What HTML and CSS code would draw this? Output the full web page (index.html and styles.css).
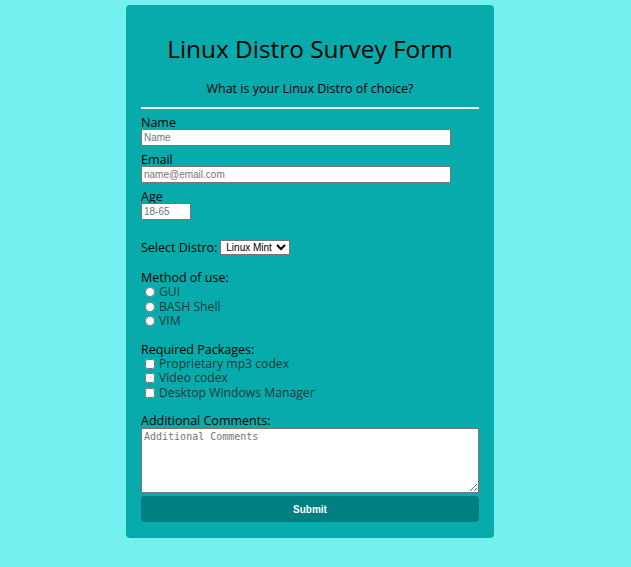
FILE: index.html
```html
<!DOCTYPE html>
<html>
<head>
<meta charset="utf-8">
<link rel="stylesheet" href="styles.css">
</head>
<body>
<main class="card">
  <h1 class="title">Linux Distro Survey Form</h1>
  <p class="subtitle">What is your Linux Distro of choice?</p>
  <hr class="rule">
  <form class="form">
    <div class="field">
      <label class="label">Name</label>
      <input class="text-input wide" type="text" placeholder="Name">
    </div>
    <div class="field">
      <label class="label">Email</label>
      <input class="text-input wide" type="email" placeholder="name@email.com">
    </div>
    <div class="field">
      <label class="label">Age</label>
      <input class="text-input age" type="text" placeholder="18-65">
    </div>
    <div class="select-row">
      <label class="label">Select Distro:</label>
      <select class="select"><option>Linux Mint</option></select>
    </div>
    <div class="group group-first">
      <div class="label">Method of use:</div>
      <label class="option"><input type="radio" name="m" class="radio"> GUI</label>
      <label class="option"><input type="radio" name="m" class="radio"> BASH Shell</label>
      <label class="option"><input type="radio" name="m" class="radio"> VIM</label>
    </div>
    <div class="group">
      <div class="label">Required Packages:</div>
      <label class="option"><input type="checkbox" class="check"> Proprietary mp3 codex</label>
      <label class="option"><input type="checkbox" class="check"> Video codex</label>
      <label class="option"><input type="checkbox" class="check"> Desktop Windows Manager</label>
    </div>
    <div class="comments">
      <div class="label">Additional Comments:</div>
      <textarea class="textarea" placeholder="Additional Comments"></textarea>
    </div>
    <button type="button" class="submit">Submit</button>
  </form>
</main>
</body>
</html>
```
FILE: styles.css
```css
html, body {
  margin: 0;
  padding: 0;
}
body {
  background: #74f0ef;
  font-family: "Open Sans", "Noto Sans", sans-serif;
  color: #000;
  min-height: 567px;
}
.card {
  width: 338px;
  margin: 5px 0 0 126px;
  background: #08abab;
  border-radius: 4px;
  padding: 15px 15px 16px;
}
.title {
  margin: 14px 0 0;
  font-size: 24.4px;
  font-weight: 400;
  text-align: center;
  line-height: 30px;
}
.subtitle {
  margin: 16px 0 0;
  font-size: 12.5px;
  text-align: center;
  line-height: 18px;
}
.rule {
  margin: 9px 0 0;
  border: none;
  border-top: 2px solid #f2f2f2;
  height: 0;
}
.form {
  display: flex;
  flex-direction: column;
}
.label {
  display: block;
  font-size: 12.5px;
  line-height: 15px;
}
.field {
  display: flex;
  flex-direction: column;
  margin-top: 6px;
}
.field + .field {
  margin-top: 6px;
}
.text-input {
  box-sizing: border-box;
  height: 17px;
  border: 1px solid #767676;
  padding: 1px 2px;
  font-family: "Liberation Sans", Arial, sans-serif;
  font-size: 10px;
  background: #fff;
  margin-top: -1px;
}
.text-input::placeholder {
  color: #757575;
}
.wide {
  width: 310px;
}
.age {
  width: 50px;
}
.select-row {
  display: flex;
  align-items: center;
  gap: 3px;
  margin-top: 20px;
}
.select {
  font-family: "Liberation Sans", Arial, sans-serif;
  font-size: 10px;
  height: 15px;
  padding: 0 1px;
  border: 1px solid #767676;
  background: #fff;
  color: #000;
  border-radius: 0;
}
.group {
  display: flex;
  flex-direction: column;
  margin-top: 13px;
}
.group-first {
  margin-top: 15px;
}
.option {
  display: flex;
  align-items: center;
  font-size: 12.2px;
  line-height: 14.5px;
  color: #1c3a3a;
}
.radio, .check {
  margin: 0 4px 0 4px;
  width: 10px;
  height: 10px;
}
.comments {
  display: flex;
  flex-direction: column;
  margin-top: 13px;
}
.textarea {
  box-sizing: border-box;
  width: 338px;
  height: 65px;
  border: 1px solid #767676;
  padding: 2px;
  font-family: "DejaVu Sans Mono", monospace;
  font-size: 10px;
  margin: 0;
  resize: both;
}
.submit {
  margin-top: 3px;
  height: 26px;
  border: none;
  border-radius: 4px;
  background: #007f80;
  color: #fff;
  font-family: "Liberation Sans", Arial, sans-serif;
  font-size: 10px;
  font-weight: 700;
}
```
